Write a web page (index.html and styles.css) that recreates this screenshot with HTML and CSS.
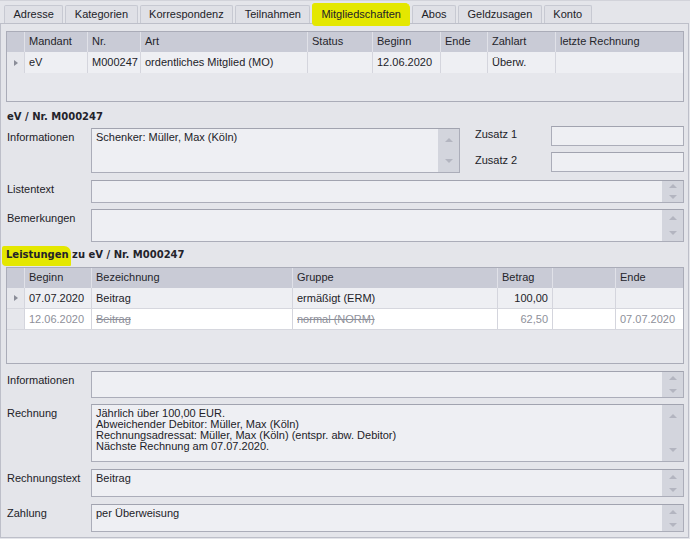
FILE: index.html
```html
<!DOCTYPE html>
<html lang="de">
<head>
<meta charset="utf-8">
<title>Mitgliedschaften</title>
<link rel="stylesheet" href="styles.css">
</head>
<body>
<div class="topline"></div>
<div class="tabs">
  <div class="tab">Adresse</div>
  <div class="tab">Kategorien</div>
  <div class="tab">Korrespondenz</div>
  <div class="tab">Teilnahmen</div>
  <div class="tab active">Mitgliedschaften</div>
  <div class="tab">Abos</div>
  <div class="tab">Geldzusagen</div>
  <div class="tab">Konto</div>
</div>
<div class="page">
  <div class="grid grid-m">
    <div class="grow head">
      <div class="cell ind"></div>
      <div class="cell">Mandant</div>
      <div class="cell">Nr.</div>
      <div class="cell">Art</div>
      <div class="cell">Status</div>
      <div class="cell">Beginn</div>
      <div class="cell">Ende</div>
      <div class="cell">Zahlart</div>
      <div class="cell">letzte Rechnung</div>
    </div>
    <div class="grow data">
      <div class="cell ind"><span class="rowmark"></span></div>
      <div class="cell">eV</div>
      <div class="cell">M000247</div>
      <div class="cell">ordentliches Mitglied (MO)</div>
      <div class="cell"></div>
      <div class="cell">12.06.2020</div>
      <div class="cell"></div>
      <div class="cell">Überw.</div>
      <div class="cell"></div>
    </div>
  </div>

  <div class="title title-first">eV / Nr. M000247</div>

  <div class="row row-info">
    <div class="label">Informationen</div>
    <div class="memo memo-info">
      <div class="memo-text">Schenker: Müller, Max (Köln)</div>
      <div class="sbar"><div class="sbtn"><span class="up"></span></div><div class="sbtn"><span class="down"></span></div></div>
    </div>
    <div class="extra">
      <div class="extra-row"><div class="elabel">Zusatz 1</div><div class="edit"></div></div>
      <div class="extra-row"><div class="elabel">Zusatz 2</div><div class="edit"></div></div>
    </div>
  </div>

  <div class="row row-liste">
    <div class="label">Listentext</div>
    <div class="memo memo-full h23">
      <div class="memo-text"></div>
      <div class="sbar"><div class="sbtn"><span class="up"></span></div><div class="sbtn"><span class="down"></span></div></div>
    </div>
  </div>

  <div class="row row-bem">
    <div class="label">Bemerkungen</div>
    <div class="memo memo-full h33">
      <div class="memo-text"></div>
      <div class="sbar"><div class="sbtn"><span class="up"></span></div><div class="sbtn"><span class="down"></span></div></div>
    </div>
  </div>

  <div class="title title-second"><span class="mark">Leistungen</span> zu eV / Nr. M000247</div>

  <div class="grid grid-l">
    <div class="grow head">
      <div class="cell ind"></div>
      <div class="cell">Beginn</div>
      <div class="cell">Bezeichnung</div>
      <div class="cell">Gruppe</div>
      <div class="cell">Betrag</div>
      <div class="cell"></div>
      <div class="cell">Ende</div>
    </div>
    <div class="grow data line">
      <div class="cell ind"><span class="rowmark"></span></div>
      <div class="cell">07.07.2020</div>
      <div class="cell">Beitrag</div>
      <div class="cell">ermäßigt (ERM)</div>
      <div class="cell num">100,00</div>
      <div class="cell"></div>
      <div class="cell"></div>
    </div>
    <div class="grow data line old">
      <div class="cell ind"></div>
      <div class="cell">12.06.2020</div>
      <div class="cell"><s>Beitrag</s></div>
      <div class="cell"><s>normal (NORM)</s></div>
      <div class="cell num">62,50</div>
      <div class="cell"></div>
      <div class="cell">07.07.2020</div>
    </div>
  </div>

  <div class="row row-info2">
    <div class="label">Informationen</div>
    <div class="memo memo-full h27">
      <div class="memo-text"></div>
      <div class="sbar"><div class="sbtn"><span class="up"></span></div><div class="sbtn"><span class="down"></span></div></div>
    </div>
  </div>

  <div class="row row-rech">
    <div class="label">Rechnung</div>
    <div class="memo memo-full h58">
      <div class="memo-text">Jährlich über 100,00 EUR.<br>Abweichender Debitor: Müller, Max (Köln)<br>Rechnungsadressat: Müller, Max (Köln) (entspr. abw. Debitor)<br>Nächste Rechnung am 07.07.2020.</div>
      <div class="sbar"><div class="sbtn"><span class="up"></span></div><div class="sbtn"><span class="down"></span></div></div>
    </div>
  </div>

  <div class="row row-rtext">
    <div class="label">Rechnungstext</div>
    <div class="memo memo-full h28">
      <div class="memo-text">Beitrag</div>
      <div class="sbar"><div class="sbtn"><span class="up"></span></div><div class="sbtn"><span class="down"></span></div></div>
    </div>
  </div>

  <div class="row row-zahl">
    <div class="label">Zahlung</div>
    <div class="memo memo-full h28">
      <div class="memo-text">per Überweisung</div>
      <div class="sbar"><div class="sbtn"><span class="up"></span></div><div class="sbtn"><span class="down"></span></div></div>
    </div>
  </div>
</div>
</body>
</html>
```

FILE: styles.css
```css
* { box-sizing: border-box; }

html, body {
  margin: 0;
  padding: 0;
}

body {
  width: 690px;
  height: 539px;
  overflow: hidden;
  background: #e4e5ea;
  font-family: "Liberation Sans", Arial, sans-serif;
  font-size: 11px;
  color: #222228;
}

.topline {
  height: 1px;
  background: #d2d3da;
}

/* Tabs */
.tabs {
  display: flex;
  align-items: flex-end;
  gap: 2px;
  height: 22px;
  padding-left: 4px;
}

.tab {
  height: 18px;
  padding: 0 8.5px;
  border: 1px solid #c7c9d2;
  border-bottom: none;
  border-radius: 2px 2px 0 0;
  background: #dfe0e6;
  line-height: 17px;
  white-space: nowrap;
}

.tab.active {
  position: relative;
  z-index: 1;
  height: 23px;
  margin-bottom: -3px;
  padding: 0 8px;
  background: #e4e700;
  border-color: #e4e700;
  border-radius: 3px 5px 2px 4px;
  line-height: 20px;
}

/* Tab page */
.page {
  width: 689px;
  height: 515px;
  border: 1px solid #bdbfc9;
  padding: 7px 4px 0 5px;
}

/* Grids */
.grid {
  width: 678px;
  border: 1px solid #aaacb8;
  background: #e6e7ec;
}

.grid-m { height: 71px; }
.grid-l { height: 97px; margin-top: 5px; }

.grow {
  display: grid;
}

.grid-m .grow { grid-template-columns: 17px 63px 53px 167px 65px 68px 47px 68px 1fr; }
.grid-l .grow { grid-template-columns: 17px 67px 201px 205px 55px 63px 1fr; }

.head {
  height: 20px;
  background: #c9cbd6;
  line-height: 19px;
  color: #25252b;
}

.head .cell { border-left: 1px solid #e0e1e8; }
.head .cell.ind { border-left: none; }

.data {
  height: 21px;
  line-height: 20px;
  background: #eeeff3;
}

.data .cell { border-left: 1px solid #d4d5dd; }
.data .cell.ind { border-left: none; background: #e6e7ec; }

.data.line { border-bottom: 1px solid #d6d7de; }

.data.old {
  background: #ffffff;
  color: #8e909a;
}

.cell {
  padding: 0 4px;
  white-space: nowrap;
  overflow: hidden;
}

.cell.num { text-align: right; }

.cell.ind {
  padding: 0;
  display: flex;
  align-items: center;
  justify-content: center;
}

.rowmark {
  width: 0;
  height: 0;
  border-top: 3px solid transparent;
  border-bottom: 3px solid transparent;
  border-left: 4px solid #8b8d98;
  margin-left: 1px;
}

/* Section titles */
.title {
  font-family: "DejaVu Sans", Verdana, sans-serif;
  font-weight: bold;
  font-size: 10px;
  line-height: 14px;
  height: 14px;
  color: #23232a;
  padding-left: 1px;
}

.title-first { margin-top: 8px; }
.title-second { margin-top: 6px; }

.mark {
  background: #e4e700;
  padding: 3px 2px 6px 4px;
  margin-left: -5px;
  margin-right: -2px;
  border-radius: 2px 7px 1px 4px;
}

/* Form rows */
.row {
  display: flex;
  align-items: flex-start;
}

.row-info { margin-top: 4px; }
.row-liste { margin-top: 7px; }
.row-bem { margin-top: 6px; }
.row-info2 { margin-top: 7px; }
.row-rech { margin-top: 6px; }
.row-rtext { margin-top: 7px; }
.row-zahl { margin-top: 7px; }

.label {
  width: 85px;
  flex: none;
  padding-top: 3px;
  padding-left: 1px;
  line-height: 13px;
  white-space: nowrap;
}

.memo {
  display: flex;
  border: 1px solid #abadb9;
  border-top-color: #a1a3af;
  background: #eeeff3;
}

.memo-info { width: 369px; height: 45px; flex: none; }
.memo-full { width: 593px; flex: none; }

.h23 { height: 23px; }
.h27 { height: 27px; }
.h28 { height: 28px; }
.h33 { height: 33px; }
.h58 { height: 58px; }

.memo-text {
  flex: 1;
  padding: 3px 4px 0 4px;
  line-height: 11px;
  white-space: nowrap;
  overflow: hidden;
}

.sbar {
  width: 21px;
  flex: none;
  background: #d3d5dd;
  display: flex;
  flex-direction: column;
  justify-content: space-between;
}

.sbtn {
  flex: 0 1 22px;
  display: flex;
  align-items: center;
  justify-content: center;
}

.up, .down {
  width: 0;
  height: 0;
  border-left: 4px solid transparent;
  border-right: 4px solid transparent;
}

.up { border-bottom: 4px solid #b3b5c0; }
.down { border-top: 4px solid #b3b5c0; }

/* Zusatz fields */
.extra {
  display: flex;
  flex-direction: column;
  gap: 6px;
  margin-left: 15px;
  margin-top: -2px;
}

.extra-row {
  display: flex;
}

.elabel {
  width: 76px;
  line-height: 17px;
}

.edit {
  width: 133px;
  height: 20px;
  border: 1px solid #abadb9;
  border-top-color: #a1a3af;
  background: #eeeff3;
}
```
